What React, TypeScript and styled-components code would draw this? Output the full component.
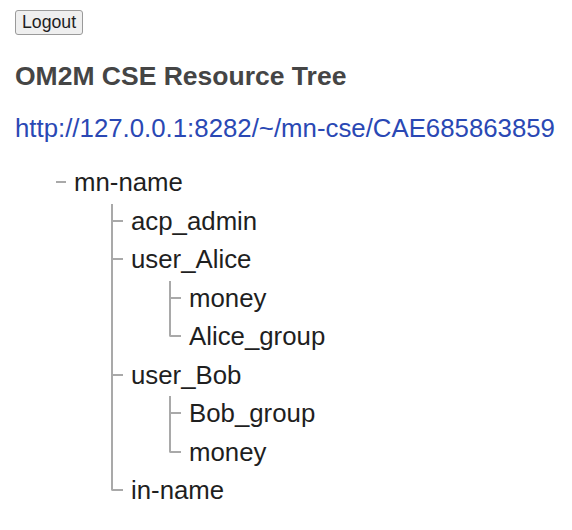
import styled, { createGlobalStyle } from "styled-components";

// -----------------DATA-----------------//
interface TreeNode {
    name: string
    children?: TreeNode[]
}

const tree: TreeNode = {
    name: "mn-name",
    children: [
        { name: "acp_admin" },
        { name: "user_Alice", children: [{ name: "money" }, { name: "Alice_group" }] },
        { name: "user_Bob", children: [{ name: "Bob_group" }, { name: "money" }] },
        { name: "in-name" },
    ],
};

const LINE = "2px solid #a9a9a9";

// -----------------STYLES-----------------//
const GlobalStyle = createGlobalStyle`
  body {
    margin: 0;
    background: #ffffff;
    font-family: "Liberation Sans", Arial, sans-serif;
    color: #222222;
  }
`;

const Page = styled.div`
  display: flex;
  flex-direction: column;
  align-items: flex-start;
  padding: 10px 15px;
`;

const LogoutButton = styled.button`
  font-family: "Liberation Sans", Arial, sans-serif;
  font-size: 17.7px;
  line-height: 19px;
  color: #1e1e1e;
  background: #efefef;
  border: 1px solid #9a9a9a;
  border-radius: 3px;
  padding: 2px 6px;
  margin: 0;
`;

const Title = styled.h2`
  font-size: 26.5px;
  font-weight: bold;
  color: #454545;
  margin: 26px 0 0 0;
`;

const CseLink = styled.a`
  font-size: 25.8px;
  color: #2a48b4;
  text-decoration: none;
  margin-top: 22px;
`;

const TreeList = styled.ul<{ $indent: number }>`
  list-style: none;
  margin: 0 0 0 ${(p) => p.$indent}px;
  padding: 0;
`;

const TreeItem = styled.li<{ $line: boolean; $first: boolean }>`
  border-left: ${(p) => (p.$line ? LINE : "2px solid transparent")};
  margin-left: -2px;
  ${(p) => p.$first && p.$line && "border-image: linear-gradient(to bottom, transparent 3px, #a9a9a9 3px) 1;"}
`;

const Row = styled.div`
  display: flex;
  align-items: flex-start;
  height: 38.5px;
  gap: 8px;
`;

const Connector = styled.span<{ $kind: "dash" | "tick" | "corner"; $first?: boolean }>`
  flex: none;
  width: ${(p) => (p.$kind === "corner" ? "12px" : "10px")};
  height: ${(p) => (p.$first && p.$kind === "corner" ? "17px" : "20px")};
  margin-top: ${(p) => (p.$first && p.$kind === "corner" ? "3px" : "0")};
  box-sizing: border-box;
  border-bottom: ${LINE};
  border-left: ${(p) => (p.$kind === "corner" ? LINE : "none")};
  border-bottom-left-radius: ${(p) => (p.$kind === "corner" ? "2px" : "0")};
  margin-left: ${(p) => (p.$kind === "corner" ? "-2px" : "0")};
`;

const Label = styled.span`
  font-size: 25.8px;
  line-height: 38.5px;
  color: #1f1f1f;
  white-space: nowrap;
`;

const TreeWrap = styled.div`
  margin-top: 20px;
  margin-left: 41px;
`;

// -----------------COMPONENTS-----------------//
function Node({ node, last, first, root }: { node: TreeNode; last: boolean; first: boolean; root?: boolean }) {
    const kind = root ? "dash" : last ? "corner" : "tick";
    return (
        <TreeItem $line={!root && !last} $first={first}>
            <Row>
                <Connector $kind={kind} $first={first} />
                <Label>{node.name}</Label>
            </Row>
            {node.children && (
                <TreeList $indent={root ? 57 : 58}>
                    {node.children.map((c, i) => (
                        <Node
                            key={c.name + i}
                            node={c}
                            first={i === 0}
                            last={i === node.children!.length - 1}
                        />
                    ))}
                </TreeList>
            )}
        </TreeItem>
    );
}

export default function App() {
    return (
        <>
            <GlobalStyle />
            <Page>
                <LogoutButton>Logout</LogoutButton>
                <Title>OM2M CSE Resource Tree</Title>
                <CseLink href="#">http://127.0.0.1:8282/~/mn-cse/CAE685863859</CseLink>
                <TreeWrap>
                    <TreeList $indent={0}>
                        <Node node={tree} first last root />
                    </TreeList>
                </TreeWrap>
            </Page>
        </>
    );
}
